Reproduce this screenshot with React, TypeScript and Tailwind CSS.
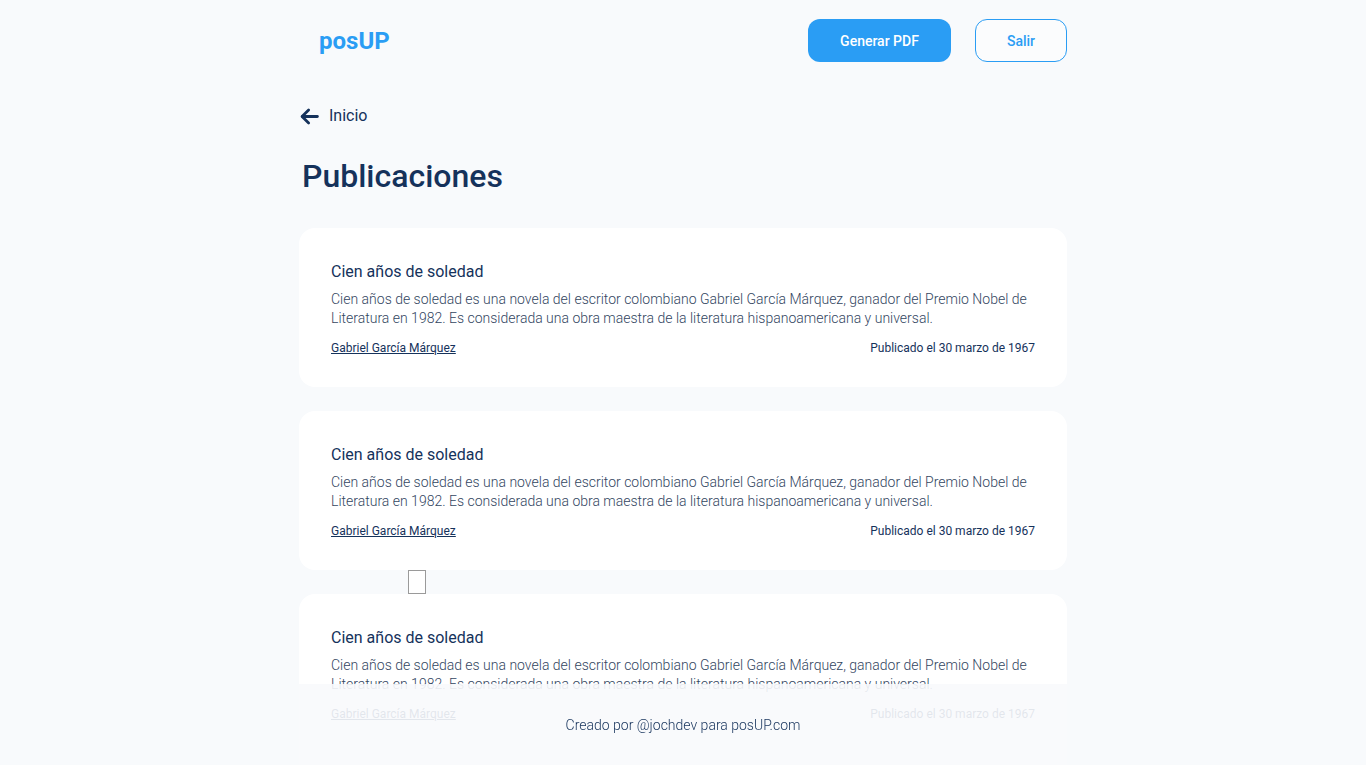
import React from 'react';

const posts = [1, 2, 3].map((id) => ({
  id,
  title: 'Cien años de soledad',
  body: 'Cien años de soledad es una novela del escritor colombiano Gabriel García Márquez, ganador del Premio Nobel de Literatura en 1982. Es considerada una obra maestra de la literatura hispanoamericana y universal.',
  author: 'Gabriel García Márquez',
  date: 'Publicado el 30 marzo de 1967',
}));

const PostCard: React.FC<{ title: string; body: string; author: string; date: string; marker?: boolean }> = ({ title, body, author, date, marker }) => (
  <div className="relative bg-white rounded-2xl px-8 pt-8 pb-[31px]">
    {marker && (
      <div className="absolute -top-6 left-[109px] w-[18px] h-6 bg-white border border-[#9a9a9a]" />
    )}
    <h3 className="text-base font-normal text-[#15325b] leading-6">{title}</h3>
    <p className="mt-[6px] text-sm font-light text-[#33465f] leading-[19px]">{body}</p>
    <div className="mt-3 flex items-center justify-between text-xs text-[#15325b] leading-4">
      <a href="#" className="underline">{author}</a>
      <span>{date}</span>
    </div>
  </div>
);

export default function App() {
  return (
    <div className="min-h-screen bg-[#f8fafc] font-['Roboto',sans-serif] text-[#15325b]">
      <div className="max-w-3xl mx-auto pb-24">
        <header className="h-[81px] flex items-center justify-between">
          <span className="ml-5 text-2xl font-bold text-[#2a9df4]">posUP</span>
          <div className="flex items-center gap-6">
            <button className="w-[143px] h-[43px] rounded-xl bg-[#2a9df4] text-white text-sm font-medium">
              Generar PDF
            </button>
            <button className="w-[92px] h-[43px] rounded-xl border border-[#2a9df4] text-[#2a9df4] text-sm font-medium bg-white/40">
              Salir
            </button>
          </div>
        </header>

        <a href="#" className="mt-[23px] flex items-center gap-[9px] text-base text-[#15325b] w-max">
          <svg width="21" height="21" viewBox="0 0 24 24" fill="none" stroke="currentColor" strokeWidth="3.2" strokeLinecap="round" strokeLinejoin="round">
            <path d="M21 12H4" />
            <path d="M11 4.5L3.5 12l7.5 7.5" />
          </svg>
          <span>Inicio</span>
        </a>

        <h1 className="mt-[28px] ml-[3px] text-[32px] font-medium leading-10">Publicaciones</h1>

        <div className="mt-8 flex flex-col gap-6">
          {posts.map((p, i) => (
            <PostCard key={p.id} title={p.title} body={p.body} author={p.author} date={p.date} marker={i === 2} />
          ))}
        </div>
      </div>

      <footer className="fixed bottom-0 left-1/2 -translate-x-1/2 w-full max-w-3xl h-[81px] bg-[#f8fafc]/90 flex items-center justify-center">
        <span className="text-sm font-light text-[#15325b]">Creado por @jochdev para posUP.com</span>
      </footer>
    </div>
  );
}
